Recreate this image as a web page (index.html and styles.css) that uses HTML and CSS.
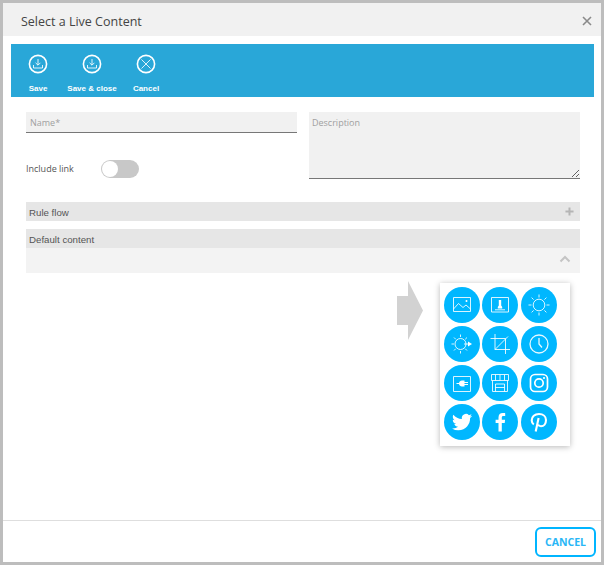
FILE: index.html
```html
<!DOCTYPE html>
<html lang="en">
<head>
<meta charset="utf-8">
<title>Select a Live Content</title>
<link rel="stylesheet" href="styles.css">
</head>
<body>
<div class="modal">
  <header class="modal-head">
    <h1 class="modal-title">Select a Live Content</h1>
    <svg class="modal-close" viewBox="0 0 10 10"><path d="M1 1l8 8M9 1l-8 8"/></svg>
  </header>
  <div class="modal-body">
    <div class="toolbar">
      <div class="tool">
        <svg class="tool-icon" viewBox="0 0 20 20"><circle class="ring" cx="10" cy="10" r="8.6"/><path class="thin" d="M10 5v6M7.6 8.800L10 11.200l2.400-2.400M5.500 11v3h9v-3"/></svg>
        <span class="tool-label">Save</span>
      </div>
      <div class="tool">
        <svg class="tool-icon" viewBox="0 0 20 20"><circle class="ring" cx="10" cy="10" r="8.6"/><path class="thin" d="M10 5v6M7.6 8.800L10 11.200l2.400-2.400M5.500 11v3h9v-3"/></svg>
        <span class="tool-label">Save &amp; close</span>
      </div>
      <div class="tool">
        <svg class="tool-icon" viewBox="0 0 20 20"><circle class="ring" cx="10" cy="10" r="8.6"/><path class="thin" d="M5.500 5.500l9 9M14.500 5.500l-9 9"/></svg>
        <span class="tool-label">Cancel</span>
      </div>
    </div>
    <div class="content">
      <div class="form-grid">
        <div class="form-left">
          <input class="field" type="text" placeholder="Name*">
          <div class="switch-row">
            <span class="switch-label">Include link</span>
            <span class="switch"><span class="switch-knob"></span></span>
          </div>
        </div>
        <textarea class="field field-area" placeholder="Description"></textarea>
      </div>
      <div class="bar bar-rule">
        <span>Rule flow</span>
        <svg class="bar-icon" viewBox="0 0 10 10"><path class="plus" d="M5 .5v9M.5 5h9"/></svg>
      </div>
      <div class="bar bar-default"><span>Default content</span></div>
      <div class="sub-bar">
        <svg class="chevron" viewBox="0 0 12 8"><path d="M1.500 6.500L6 2l4.500 4.500"/></svg>
      </div>
      <div class="palette-row">
        <svg class="arrow" viewBox="0 0 26 59"><path d="M0 15h11V0l15 29.500L11 59V44H0z"/></svg>
        <div class="palette">
          <svg class="pick" viewBox="0 0 36 36"><circle class="disc" cx="18" cy="18" r="18"/><path class="line" d="M9.500 10.500h17v14h-17zM9.500 22l5-5.500 4.500 4 3-2.500 4.500 4"/><circle class="solid" cx="22.500" cy="14" r="1"/></svg>
          <svg class="pick" viewBox="0 0 36 36"><circle class="disc" cx="18" cy="18" r="18"/><path class="line" d="M9.500 10.500h17v14.500h-17z"/><path class="solid" d="M16.800 13h2.400v5.500l1 1.500v1.500h-4.400V20l1-1.500z"/><path class="line" d="M13 22.800h10"/></svg>
          <svg class="pick" viewBox="0 0 36 36"><circle class="disc" cx="18" cy="18" r="18"/><circle class="line" cx="18" cy="18" r="5.800"/><path class="line" d="M18 7.500v3M18 25.500v3M7.500 18h3M25.500 18h3M10.600 10.600l2 2M23.400 23.400l2 2M25.400 10.600l-2 2M12.600 23.400l-2 2"/></svg>
          <svg class="pick" viewBox="0 0 36 36"><circle class="disc" cx="18" cy="18" r="18"/><circle class="line" cx="16.500" cy="18" r="5.500"/><path class="line" d="M16.500 8.500v2.500M16.500 25v2.500M7.500 18h2.500M10 11.500l1.800 1.800M21.200 22.700l1.800 1.800M23 11.500l-1.800 1.800M11.800 22.700L10 24.500M20 18h4"/><path class="solid" d="M24 15.500l4 2.500-4 2.500z"/></svg>
          <svg class="pick" viewBox="0 0 36 36"><circle class="disc" cx="18" cy="18" r="18"/><path class="line" d="M13 8v15.500h15M8.500 12.500H23.500V28M13 23.500L26 10.500"/></svg>
          <svg class="pick" viewBox="0 0 36 36"><circle class="disc" cx="18" cy="18" r="18"/><circle class="line-mid" cx="18" cy="18" r="9"/><path class="line-mid" d="M18 12v6l3 3.500"/></svg>
          <svg class="pick" viewBox="0 0 36 36"><circle class="disc" cx="18" cy="18" r="18"/><path class="line" d="M9.500 11.500h17v15h-17z"/><path class="solid" d="M18 15.500h2.500v1.500h3.500v1h-3.500v1h3.500v1h-3.500v1.500H18c-1.600 0-2.700-1-3-2.500h-2.500v-1H15c.3-1.500 1.400-2.500 3-2.500z"/></svg>
          <svg class="pick" viewBox="0 0 36 36"><circle class="disc" cx="18" cy="18" r="18"/><path class="line" d="M9.500 9.500h17v6h-17zM10.500 15.500v11h15v-11M13.500 26.500v-7.500h9v7.500M13.500 9.500v6M18 9.500v6M22.500 9.500v6M13.500 22.500h9"/></svg>
          <svg class="pick" viewBox="0 0 36 36"><circle class="disc" cx="18" cy="18" r="18"/><rect class="line-bold" x="9.500" y="9.500" width="17" height="17" rx="4.500"/><circle class="line-bold" cx="18" cy="18" r="4.200"/><circle class="solid" cx="23" cy="13" r="1.100"/></svg>
          <svg class="pick" viewBox="0 0 36 36"><circle class="disc" cx="18" cy="18" r="18"/><g transform="translate(8 8) scale(.84)"><path class="solid" d="M23.953 4.570a10 10 0 01-2.825.775 4.958 4.958 0 002.163-2.723c-.951.555-2.005.959-3.127 1.184a4.920 4.920 0 00-8.384 4.482C7.690 8.095 4.067 6.130 1.640 3.162a4.822 4.822 0 00-.666 2.475c0 1.710.870 3.213 2.188 4.096a4.904 4.904 0 01-2.228-.616v.060a4.923 4.923 0 003.946 4.827 4.996 4.996 0 01-2.212.085 4.936 4.936 0 004.604 3.417 9.867 9.867 0 01-6.102 2.105c-.390 0-.779-.023-1.170-.067a13.995 13.995 0 007.557 2.209c9.053 0 13.998-7.496 13.998-13.985 0-.210 0-.420-.015-.630A9.935 9.935 0 0024 4.590z"/></g></svg>
          <svg class="pick" viewBox="0 0 36 36"><circle class="disc" cx="18" cy="18" r="18"/><path class="solid" d="M19.800 27.500v-8.400h2.900l.4-3.300h-3.300v-2.100c0-1 .3-1.600 1.700-1.600h1.700V9.200c-.3 0-1.300-.1-2.500-.1-2.500 0-4.200 1.500-4.200 4.300v2.400h-2.900v3.300h2.900v8.400z"/></svg>
          <svg class="pick" viewBox="0 0 36 36"><circle class="disc" cx="18" cy="18" r="18"/><path class="line-heavy" d="M12.800 20.500c-1.400-1-2.100-2.500-2.100-4.200 0-3.600 3-6.300 7.300-6.300 4.200 0 7 2.600 7 6 0 3.700-2.200 6.300-5 6.300-1.300 0-2.500-.7-2.900-1.800M17.600 14l-2.900 13.500"/></svg>
        </div>
      </div>
    </div>
  </div>
  <footer class="modal-foot">
    <button class="btn-cancel" type="button">CANCEL</button>
  </footer>
</div>
</body>
</html>
```

FILE: styles.css
```css
* { box-sizing: border-box; }
html, body { margin: 0; height: 100%; }
body {
  background: #bdbdbd;
  padding: 3px;
  font-family: "Open Sans", "Liberation Sans", sans-serif;
  overflow: hidden;
}
.modal {
  display: flex;
  flex-direction: column;
  height: 559px;
  background: #fff;
}
.modal-head {
  flex: none;
  height: 33px;
  background: #f1f1f1;
  display: flex;
  align-items: center;
  justify-content: space-between;
  padding: 3px 9px 0 18px;
}
.modal-title {
  margin: 0;
  font-size: 12.500px;
  font-weight: 400;
  color: #444;
}
.modal-close { width: 10px; height: 10px; fill: none; stroke: #8a8a8a; stroke-width: 1.600; }
.modal-body { flex: 1; min-height: 0; }
.toolbar {
  display: flex;
  height: 53px;
  margin: 8px 7px 0 8px;
  background: #29a7d8;
  padding-top: 10px;
}
.tool {
  width: 54px;
  display: flex;
  flex-direction: column;
  align-items: center;
}
.tool-icon { width: 20px; height: 20px; fill: none; stroke: #fff; }
.ring { stroke-width: 1.600; }
.thin { stroke-width: 1; opacity: .85; }
.tool-label {
  margin-top: 10px;
  font-family: "Liberation Sans", Arial, sans-serif;
  font-size: 8px;
  font-weight: 700;
  line-height: 10px;
  color: #fff;
  white-space: nowrap;
}
.content { margin: 15px 21px 0 23px; }
.form-grid {
  display: grid;
  grid-template-columns: 271px 271px;
  column-gap: 12px;
}
.form-left { display: flex; flex-direction: column; }
.field {
  display: block;
  width: 100%;
  height: 21px;
  margin: 0;
  padding: 0 4px;
  border: 0;
  border-bottom: 1px solid #777;
  border-radius: 0;
  outline: 0;
  background: #f1f1f1;
  font-family: "Open Sans", "Liberation Sans", sans-serif;
  font-size: 9px;
  color: #444;
}
.field::placeholder { color: #a0a0a0; opacity: 1; }
.field-area { height: 67px; padding: 5px 3px; line-height: 12px; resize: both; }
.switch-row { display: flex; align-items: center; margin-top: 27px; height: 18px; }
.switch-label { width: 75px; padding-bottom: 2px; font-size: 9px; color: #555; }
.switch {
  display: block;
  width: 38px;
  height: 18px;
  padding: 1px;
  border-radius: 9px;
  background: #c8c8c8;
}
.switch-knob {
  display: block;
  width: 16px;
  height: 16px;
  border-radius: 50%;
  background: #fff;
}
.bar {
  display: flex;
  align-items: center;
  justify-content: space-between;
  height: 19px;
  padding: 0 6px 0 3px;
  background: #e6e6e6;
  font-family: "Liberation Sans", Arial, sans-serif;
  font-size: 9.700px;
  line-height: 12px;
  color: #555;
}
.bar span { padding-top: 2px; }
.bar-rule { margin-top: 23px; }
.bar-default { margin-top: 8px; }
.bar-icon { width: 9px; height: 9px; fill: none; }
.plus { stroke: #b5b5b5; stroke-width: 2.200; }
.sub-bar {
  display: flex;
  align-items: center;
  justify-content: flex-end;
  height: 25px;
  padding: 0 9px 3px 0;
  background: #f3f3f3;
}
.chevron { width: 12px; height: 8px; fill: none; stroke: #c4c4c4; stroke-width: 2; }
.palette-row {
  display: flex;
  justify-content: flex-end;
  align-items: flex-start;
  gap: 17px;
  margin-top: 8px;
  padding-right: 10px;
}
.arrow { width: 26px; height: 59px; fill: #d2d2d2; flex: none; }
.palette {
  display: grid;
  grid-template-columns: repeat(3, 36px);
  grid-auto-rows: 36px;
  gap: 3px 2.400px;
  width: 130px;
  height: 163px;
  margin-top: 2px;
  padding: 4px;
  background: #fff;
  box-shadow: 0 1px 6px rgba(0, 0, 0, .28);
}
.pick { display: block; width: 36px; height: 36px; }
.disc { fill: #00b7ff; }
.line { fill: none; stroke: #fff; stroke-width: 1; opacity: .85; }
.line-mid { fill: none; stroke: #fff; stroke-width: 1.300; opacity: .9; }
.line-bold { fill: none; stroke: #fff; stroke-width: 1.700; }
.line-heavy { fill: none; stroke: #fff; stroke-width: 2.100; }
.solid { fill: #fff; }
.modal-foot {
  flex: none;
  height: 42px;
  border-top: 1px solid #dedede;
  display: flex;
  justify-content: flex-end;
  align-items: flex-start;
  padding: 6px 5px 0 0;
}
.btn-cancel {
  width: 61px;
  height: 30px;
  padding: 0;
  border: 2px solid #00b5ff;
  border-radius: 6px;
  background: #fff;
  font-family: "Open Sans", "Liberation Sans", sans-serif;
  font-size: 10.500px;
  font-weight: 700;
  color: #29b6f6;
}
```
